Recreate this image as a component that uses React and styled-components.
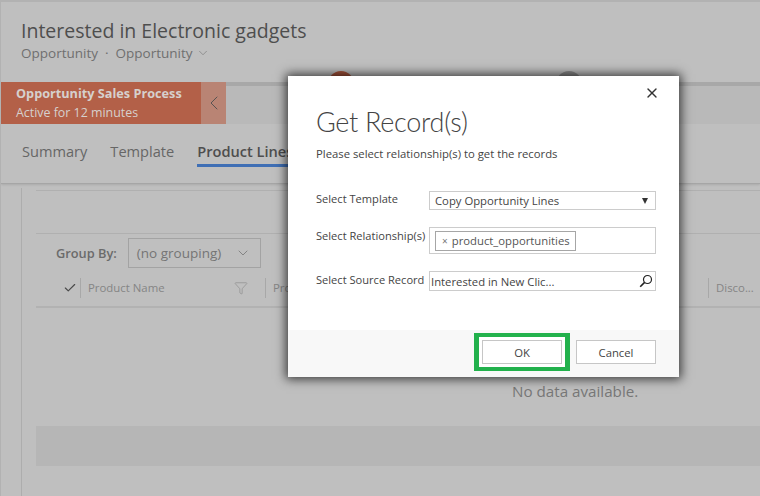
import React from "react";
import styled, { createGlobalStyle } from "styled-components";
import { ChevronLeft, ChevronDown, X, Check, Filter } from "lucide-react";

const GlobalStyle = createGlobalStyle`
  html, body { margin: 0; padding: 0; background: #bfbfbf; }
  * { box-sizing: border-box; }
  body { font-family: "Open Sans", "Noto Sans", sans-serif; }
`;

const Page = styled.div`
  position: relative;
  width: 760px;
  height: 496px;
  overflow: hidden;
  background: #bfbfbf;
  border-top: 2px solid #b2b2b2;
  border-left: 1px solid #b2b2b2;
`;

const Header = styled.header`
  height: 182px;
  display: flex;
  flex-direction: column;
  border-bottom: 1px solid #a6a6a6;
  box-shadow: 0 1px 2px #ababab;
`;

const TitleBlock = styled.div`
  padding: 17px 0 0 20px;
  height: 80px;
`;

const Title = styled.h1`
  margin: 0;
  font-size: 19.5px;
  line-height: 24px;
  font-weight: 400;
  color: #4e4e4e;
`;

const Sub = styled.div`
  display: flex;
  align-items: center;
  gap: 3px;
  font-size: 13.5px;
  line-height: 20px;
  font-weight: 500;
  color: #6f6f6f;
`;

const ProcessBar = styled.div`
  display: flex;
  height: 42px;
  position: relative;
`;

const Stage = styled.div`
  width: 200px;
  background: #b36048;
  padding: 2px 0 0 15px;
  color: #d6d0cd;
`;

const StageName = styled.div`
  font-size: 12.7px;
  line-height: 18px;
  font-weight: 700;
`;

const StageTime = styled.div`
  font-size: 12.4px;
  line-height: 21px;
`;

const Collapse = styled.div`
  width: 25px;
  background: #b98474;
  display: flex;
  align-items: center;
  justify-content: center;
  color: #4e4e4e;
`;

const Track = styled.div`
  flex: 1;
  background: #b9b9b9;
  border-top: 4px solid #a8a8a8;
`;

const Dot = styled.span`
  position: absolute;
  top: -11px;
  left: ${(p) => p.$left}px;
  width: 26px;
  height: 26px;
  border-radius: 50%;
  background: ${(p) => p.$color};
`;

const Tabs = styled.nav`
  display: flex;
  gap: 23px;
  padding: 16px 0 0 21px;
`;

const Tab = styled.div`
  font-size: 14.6px;
  line-height: 22px;
  height: 27px;
  white-space: nowrap;
  color: ${(p) => (p.$active ? "#4e4e4e" : "#666")};
  font-weight: ${(p) => (p.$active ? 600 : 400)};
  border-bottom: ${(p) => (p.$active ? "3px solid #3f6fb5" : "0")};
`;

const Body = styled.main`
  display: flex;
  height: 312px;
`;

const Rail = styled.div`
  flex: none;
  width: 21px;
  border-right: 1px solid #adadad;
  margin-top: 4px;
`;

const Content = styled.div`
  flex: 1;
  min-width: 0;
  margin-left: 14px;
  padding-top: 6px;
`;

const Rule = styled.div`
  height: 44px;
  border-top: 1px solid #b0b0b0;
  border-bottom: 1px solid #b0b0b0;
`;

const GroupRow = styled.div`
  display: flex;
  align-items: center;
  height: 34px;
  padding: 4px 0 0 20px;
  gap: 11px;
`;

const GroupLabel = styled.span`
  font-size: 12.8px;
  font-weight: 600;
  color: #6b6b6b;
`;

const GroupSelect = styled.div`
  width: 133px;
  height: 30px;
  border: 1px solid #a3a3a3;
  display: flex;
  align-items: center;
  justify-content: space-between;
  padding: 0 9px 0 8px;
  font-size: 13.5px;
  color: #757575;
`;

const GridHead = styled.div`
  display: flex;
  align-items: center;
  height: 40px;
  padding-top: 1px;
  border-bottom: 2px solid #b2b2b2;
  padding-left: 27px;
  color: #4a4a4a;
`;

const CheckMark = styled(Check)`
  flex: none;
`;

const ColCell = styled.div`
  width: ${(p) => p.$width}px;
  height: 20px;
  flex: none;
  display: flex;
  align-items: center;
  justify-content: space-between;
  border-left: 1px solid #a8a8a8;
  margin-left: ${(p) => p.$gap || 0}px;
  padding: 0 17px 0 7px;
  font-size: 11.4px;
  color: #858585;
  white-space: nowrap;
`;

const Empty = styled.div`
  height: 118px;
  padding: 73px 0 0 476px;
  font-size: 15.2px;
  line-height: 20px;
  color: #777;
  white-space: nowrap;
`;

const Band = styled.div`
  height: 40px;
  background: #b6b6b6;
`;

const Dialog = styled.div`
  position: absolute;
  left: 287px;
  top: 74px;
  width: 391px;
  height: 301px;
  background: #fff;
  box-shadow: 0 0 10px 2px rgba(0, 0, 0, 0.72);
  display: flex;
  flex-direction: column;
`;

const DialogBody = styled.div`
  flex: 1;
  padding: 30px 23px 0 28px;
  position: relative;
`;

const Close = styled.button`
  position: absolute;
  right: 19px;
  top: 9px;
  width: 16px;
  height: 16px;
  padding: 0;
  border: 0;
  background: none;
  color: #333;
  display: flex;
`;

const DialogTitle = styled.h2`
  margin: 0;
  font-family: "Lato", "Open Sans", sans-serif;
  font-size: 27px;
  letter-spacing: -0.3px;
  line-height: 32px;
  font-weight: 300;
  color: #444;
`;

const Hint = styled.p`
  margin: 8px 0 29px;
  font-size: 11.3px;
  line-height: 16px;
  color: #444;
`;

const Field = styled.div`
  display: grid;
  grid-template-columns: 113px 227px;
  margin-bottom: ${(p) => p.$mb}px;
`;

const FieldLabel = styled.label`
  padding-top: ${(p) => p.$drop || 0}px;
  font-size: 11.1px;
  line-height: 16px;
  color: #444;
  white-space: nowrap;
`;

const Input = styled.div`
  height: ${(p) => p.$h || 20}px;
  border: 1px solid #ccc;
  display: flex;
  align-items: center;
  justify-content: space-between;
  padding: 0 ${(p) => p.$pr ?? 7}px 0 ${(p) => p.$pl ?? 4}px;
  font-size: 11.3px;
  color: #444;
`;

const Caret = styled.span`
  width: 0;
  height: 0;
  border-left: 3.5px solid transparent;
  border-right: 3.5px solid transparent;
  border-top: 6px solid #333;
`;

const Pill = styled.span`
  border: 1px solid #a6a6a6;
  height: 20px;
  width: 141px;
  display: flex;
  align-items: center;
  gap: 4px;
  padding-left: 6px;
  white-space: nowrap;
  color: #555;
`;

const PillX = styled.span`
  color: #777;
  font-size: 10px;
`;

const Footer = styled.div`
  height: 47px;
  background: #f8f8f8;
  display: flex;
  align-items: center;
  justify-content: flex-end;
  gap: 6px;
  padding: 0 23px 3px 0;
`;

const Btn = styled.button`
  width: 80px;
  height: 24px;
  background: #fff;
  border: 1px solid #c6c6c6;
  font-family: inherit;
  font-size: 11.3px;
  color: #444;
  padding: 0;
`;

const Highlight = styled.span`
  display: flex;
  padding: 3px;
  background: #fff;
  border: solid #22b14c;
  border-width: 4px 5px;
`;

function LookupIcon() {
  return (
    <svg width="14" height="14" viewBox="0 0 14 14" fill="none" stroke="#222">
      <circle cx="8.5" cy="5.5" r="4" strokeWidth="1.2" />
      <path d="M5.6 8.4 1.2 12.8" strokeWidth="1.6" />
    </svg>
  );
}

export default function App() {
  return (
    <>
      <GlobalStyle />
      <Page>
        <Header>
          <TitleBlock>
            <Title>Interested in Electronic gadgets</Title>
            <Sub>
              Opportunity&nbsp;&nbsp;·&nbsp;&nbsp;Opportunity
              <ChevronDown size={14} strokeWidth={1} />
            </Sub>
          </TitleBlock>
          <ProcessBar>
            <Stage>
              <StageName>Opportunity Sales Process</StageName>
              <StageTime>Active for 12 minutes</StageTime>
            </Stage>
            <Collapse>
              <ChevronLeft size={24} strokeWidth={0.9} />
            </Collapse>
            <Track />
            <Dot $left={327} $color="#a8553c" />
            <Dot $left={555} $color="#8c8c8c" />
          </ProcessBar>
          <Tabs>
            <Tab>Summary</Tab>
            <Tab>Template</Tab>
            <Tab $active>Product Lines</Tab>
          </Tabs>
        </Header>
        <Body>
          <Rail />
          <Content>
            <Rule />
            <GroupRow>
              <GroupLabel>Group By:</GroupLabel>
              <GroupSelect>
                (no grouping)
                <ChevronDown size={16} strokeWidth={1.2} />
              </GroupSelect>
            </GroupRow>
            <GridHead>
              <CheckMark size={14} strokeWidth={2} />
              <ColCell $width={185} $gap={3}>
                Product Name
                <Filter size={14} strokeWidth={1} />
              </ColCell>
              <ColCell $width={443}>Product</ColCell>
              <ColCell $width={60}>Disco...</ColCell>
            </GridHead>
            <Empty>No data available.</Empty>
            <Band />
          </Content>
        </Body>
        <Dialog>
          <DialogBody>
            <Close>
              <X size={16} strokeWidth={2} />
            </Close>
            <DialogTitle>Get Record(s)</DialogTitle>
            <Hint>Please select relationship(s) to get the records</Hint>
            <Field $mb={17}>
              <FieldLabel>Select Template</FieldLabel>
              <Input $h={19} $pl={5}>
                Copy Opportunity Lines
                <Caret />
              </Input>
            </Field>
            <Field $mb={17}>
              <FieldLabel $drop={1}>Select Relationship(s)</FieldLabel>
              <Input $h={27} $pl={5}>
                <Pill>
                  <PillX>×</PillX>product_opportunities
                </Pill>
              </Input>
            </Field>
            <Field $mb={0}>
              <FieldLabel $drop={1}>Select Source Record</FieldLabel>
              <Input $pl={1} $pr={2}>
                Interested in New Clic...
                <LookupIcon />
              </Input>
            </Field>
          </DialogBody>
          <Footer>
            <Highlight>
              <Btn>OK</Btn>
            </Highlight>
            <Btn>Cancel</Btn>
          </Footer>
        </Dialog>
      </Page>
    </>
  );
}
